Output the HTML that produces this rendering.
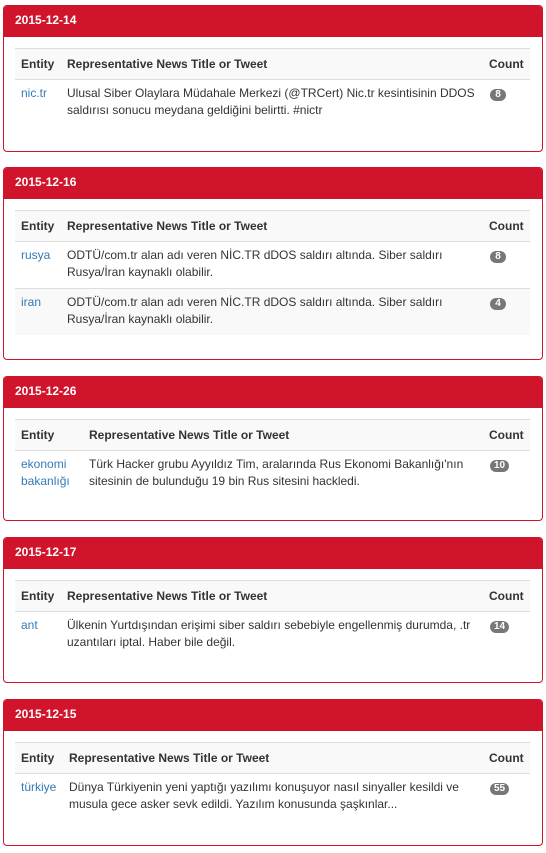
<!DOCTYPE html>
<html><head><meta charset="utf-8"><style>
body{margin:0;background:#fff;font-family:"Liberation Sans",Arial,sans-serif;font-size:12px;color:#333;}
.p{position:absolute;left:3px;width:538px;border:1px solid #d0142c;border-radius:4px;background:#fff;overflow:hidden}
.h{background:#d0142c;color:#fff;font-weight:bold;height:31px;line-height:29px;padding-left:11px;font-size:12px}
.b{padding:11px 11px 0 11px}
table{border-collapse:collapse;width:515px;table-layout:fixed}
th{text-align:left;font-weight:bold;font-size:12px;height:29px;padding:0 6px 1px 6px;border-top:1px solid #ddd;border-bottom:1px solid #ddd;background:#f9f9f9}
td{vertical-align:top;padding:5px 6px 7px 6px;line-height:17px;border-top:1px solid #ddd}
tr.s td{background:#f9f9f9}
tr:nth-child(2) td{border-top:none}
a{color:#337ab7;text-decoration:none}
.bd{display:inline-block;background:#777;color:#fff;font-weight:bold;font-size:10px;line-height:12px;min-width:8px;text-align:center;padding:0 4px;border-radius:7px;margin-top:1px;margin-left:1px}
</style></head><body>

<div class="p" style="top:5px;height:145px"><div class="h">2015-12-14</div><div class="b">
<table><colgroup><col style="width:46px"><col><col style="width:47px"></colgroup>
<tr><th>Entity</th><th>Representative News Title or Tweet</th><th>Count</th></tr>
<tr><td><a>nic.tr</a></td><td>Ulusal Siber Olaylara Müdahale Merkezi (@TRCert) Nic.tr kesintisinin DDOS<br>saldırısı sonucu meydana geldiğini belirtti. #nictr</td><td><span class="bd">8</span></td></tr>
</table></div></div>

<div class="p" style="top:167px;height:191px"><div class="h">2015-12-16</div><div class="b">
<table><colgroup><col style="width:46px"><col><col style="width:47px"></colgroup>
<tr><th>Entity</th><th>Representative News Title or Tweet</th><th>Count</th></tr>
<tr><td><a>rusya</a></td><td>ODTÜ/com.tr alan adı veren NİC.TR dDOS saldırı altında. Siber saldırı<br>Rusya/İran kaynaklı olabilir.</td><td><span class="bd">8</span></td></tr>
<tr class="s"><td><a>iran</a></td><td>ODTÜ/com.tr alan adı veren NİC.TR dDOS saldırı altında. Siber saldırı<br>Rusya/İran kaynaklı olabilir.</td><td><span class="bd">4</span></td></tr>
</table></div></div>

<div class="p" style="top:376px;height:143px"><div class="h">2015-12-26</div><div class="b">
<table><colgroup><col style="width:68px"><col><col style="width:47px"></colgroup>
<tr><th>Entity</th><th>Representative News Title or Tweet</th><th>Count</th></tr>
<tr><td><a>ekonomi<br>bakanlığı</a></td><td>Türk Hacker grubu Ayyıldız Tim, aralarında Rus Ekonomi Bakanlığı'nın<br>sitesinin de bulunduğu 19 bin Rus sitesini hackledi.</td><td><span class="bd">10</span></td></tr>
</table></div></div>

<div class="p" style="top:537px;height:144px"><div class="h">2015-12-17</div><div class="b">
<table><colgroup><col style="width:46px"><col><col style="width:47px"></colgroup>
<tr><th>Entity</th><th>Representative News Title or Tweet</th><th>Count</th></tr>
<tr><td><a>ant</a></td><td>Ülkenin Yurtdışından erişimi siber saldırı sebebiyle engellenmiş durumda, .tr<br>uzantıları iptal. Haber bile değil.</td><td><span class="bd">14</span></td></tr>
</table></div></div>

<div class="p" style="top:699px;height:145px"><div class="h">2015-12-15</div><div class="b">
<table><colgroup><col style="width:48px"><col><col style="width:47px"></colgroup>
<tr><th>Entity</th><th>Representative News Title or Tweet</th><th>Count</th></tr>
<tr><td><a>türkiye</a></td><td>Dünya Türkiyenin yeni yaptığı yazılımı konuşuyor nasıl sinyaller kesildi ve<br>musula gece asker sevk edildi. Yazılım konusunda şaşkınlar...</td><td><span class="bd">55</span></td></tr>
</table></div></div>

</body></html>
